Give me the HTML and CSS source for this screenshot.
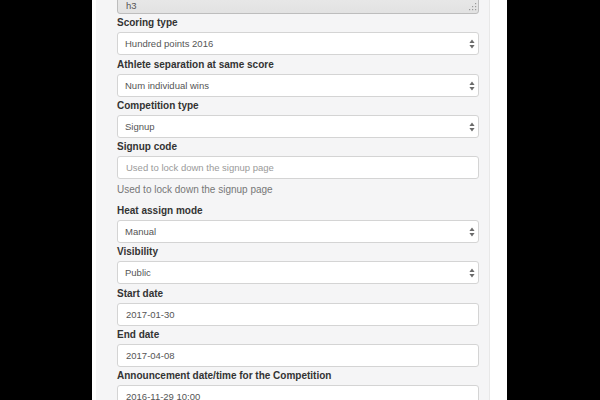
FILE: index.html
```html
<!DOCTYPE html>
<html>
<head>
<meta charset="utf-8">
<link rel="stylesheet" href="styles.css">
</head>
<body>
<div class="page">
  <div class="well">
    <form class="form">
      <div class="group">
        <div class="ta-wrap">
          <textarea class="ta" readonly>h3</textarea>
          <svg class="grip" width="8" height="8" viewBox="0 0 8 8"><g fill="#9a9a9a"><rect x="6" y="0" width="1.2" height="1.2"/><rect x="3" y="3" width="1.2" height="1.2"/><rect x="6" y="3" width="1.2" height="1.2"/><rect x="0" y="6" width="1.2" height="1.2"/><rect x="3" y="6" width="1.2" height="1.2"/><rect x="6" y="6" width="1.2" height="1.2"/></g></svg>
        </div>
      </div>
      <div class="group">
        <label class="lbl">Scoring type</label>
        <div class="sel-wrap"><select class="ctl"><option>Hundred points 2016</option></select><svg class="arrows" width="6" height="10" viewBox="0 0 6 10"><path d="M3 0.5 L5.6 4 H0.4 Z M3 9.5 L5.6 6 H0.4 Z" fill="#6b6b6b"/></svg></div>
      </div>
      <div class="group">
        <label class="lbl">Athlete separation at same score</label>
        <div class="sel-wrap"><select class="ctl"><option>Num individual wins</option></select><svg class="arrows" width="6" height="10" viewBox="0 0 6 10"><path d="M3 0.5 L5.6 4 H0.4 Z M3 9.5 L5.6 6 H0.4 Z" fill="#6b6b6b"/></svg></div>
      </div>
      <div class="group">
        <label class="lbl">Competition type</label>
        <div class="sel-wrap"><select class="ctl"><option>Signup</option></select><svg class="arrows" width="6" height="10" viewBox="0 0 6 10"><path d="M3 0.5 L5.6 4 H0.4 Z M3 9.5 L5.6 6 H0.4 Z" fill="#6b6b6b"/></svg></div>
      </div>
      <div class="group">
        <label class="lbl">Signup code</label>
        <input class="ctl inp" type="text" placeholder="Used to lock down the signup page">
        <p class="help">Used to lock down the signup page</p>
      </div>
      <div class="group">
        <label class="lbl">Heat assign mode</label>
        <div class="sel-wrap"><select class="ctl"><option>Manual</option></select><svg class="arrows" width="6" height="10" viewBox="0 0 6 10"><path d="M3 0.5 L5.6 4 H0.4 Z M3 9.5 L5.6 6 H0.4 Z" fill="#6b6b6b"/></svg></div>
      </div>
      <div class="group">
        <label class="lbl">Visibility</label>
        <div class="sel-wrap"><select class="ctl"><option>Public</option></select><svg class="arrows" width="6" height="10" viewBox="0 0 6 10"><path d="M3 0.5 L5.6 4 H0.4 Z M3 9.5 L5.6 6 H0.4 Z" fill="#6b6b6b"/></svg></div>
      </div>
      <div class="group">
        <label class="lbl">Start date</label>
        <input class="ctl inp" type="text" value="2017-01-30">
      </div>
      <div class="group">
        <label class="lbl">End date</label>
        <input class="ctl inp" type="text" value="2017-04-08">
      </div>
      <div class="group">
        <label class="lbl">Announcement date/time for the Competition</label>
        <input class="ctl inp" type="text" value="2016-11-29 10:00">
      </div>
    </form>
  </div>
</div>
</body>
</html>
```
FILE: styles.css
```css
html, body {
  margin: 0;
  padding: 0;
  background: #000;
  height: 400px;
  overflow: hidden;
}
body {
  font-family: "Liberation Sans", Arial, sans-serif;
}
.page {
  width: 411px;
  margin-left: 92px;
  height: 400px;
  background: #fff;
  padding-left: 4px;
  display: flex;
  overflow: hidden;
}
.well {
  width: 362px;
  background: #f5f5f6;
  border-right: 1px solid #e8e8e8;
  padding: 0 10px 0 21px;
  height: 400px;
}
.form {
  margin-top: -16px;
}
.group {
  margin-bottom: 2.3px;
}
.lbl {
  display: block;
  font-size: 10px;
  font-weight: bold;
  color: #333;
  line-height: 14px;
  margin-bottom: 2px;
}
.ctl {
  display: block;
  box-sizing: border-box;
  width: 100%;
  height: 23px;
  margin: 0;
  padding: 0 7px;
  border: 1px solid #d4d4d4;
  border-radius: 3px;
  background: #fff;
  font-family: "Liberation Sans", Arial, sans-serif;
  font-size: 9.5px;
  color: #555;
  -webkit-appearance: none;
  appearance: none;
  outline: none;
}
.inp::placeholder {
  color: #9a9a9a;
}
.inp {
  padding-left: 8px;
}
.sel-wrap {
  position: relative;
}
.arrows {
  position: absolute;
  right: 4px;
  top: 7px;
}
.help {
  margin: 3.5px 0 7.5px;
  font-size: 10px;
  line-height: 14px;
  color: #777;
}
.ta-wrap {
  position: relative;
}
.ta {
  display: block;
  box-sizing: border-box;
  width: 100%;
  height: 30px;
  margin: 0;
  padding: 15px 8px 2px;
  border: 1px solid #bdbdbd;
  border-radius: 3px;
  background: linear-gradient(#ededed, #e2e2e2);
  font-family: "Liberation Sans", Arial, sans-serif;
  font-size: 9.5px;
  line-height: 12px;
  color: #555;
  resize: none;
  outline: none;
  overflow: hidden;
}
.grip {
  position: absolute;
  right: 2px;
  bottom: 3px;
}
```
